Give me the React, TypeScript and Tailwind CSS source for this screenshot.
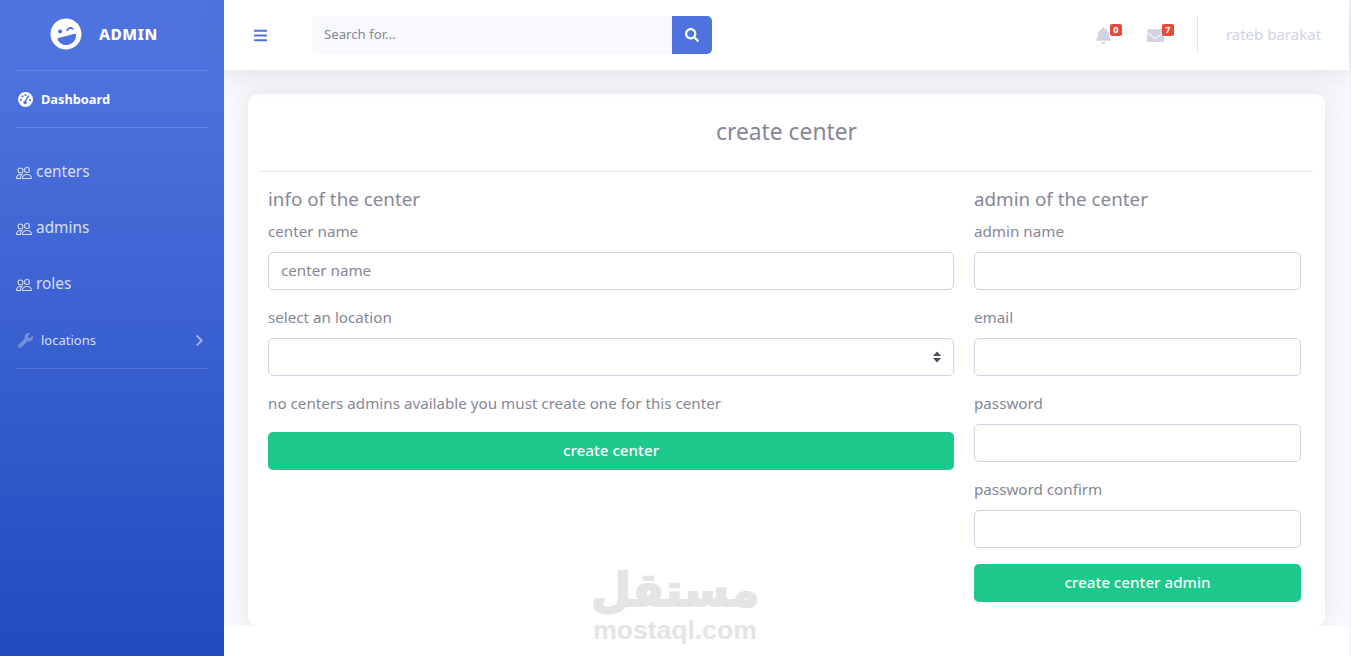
import React from "react";
import { FaLaughWink, FaWrench, FaChevronRight, FaBell, FaEnvelope, FaSearch, FaBars } from "react-icons/fa";
import { BsPeople } from "react-icons/bs";

const font = { fontFamily: '"Noto Sans", sans-serif' };

function NavItem({ label }: { label: string }) {
  return (
    <div className="h-14 flex items-center px-4 pb-[1px] text-[rgba(255,255,255,0.8)] text-[15.4px]">
      <BsPeople className="w-4 h-4 mr-1 mt-[2px] shrink-0" />
      <span>{label}</span>
    </div>
  );
}

function Field({ label, placeholder }: { label: string; placeholder?: string }) {
  return (
    <div className="mb-4">
      <label className="block text-[15.2px] leading-[22px] mb-[10px] text-[#858796]">{label}</label>
      <input
        placeholder={placeholder}
        className="block w-full h-[38px] px-3 pb-[2px] text-[15.2px] border border-[#d1d3e2] rounded-[5px] bg-white placeholder:text-[#858796] outline-none"
      />
    </div>
  );
}

export default function App() {
  return (
    <div className="relative flex h-[656px] w-[1351px] overflow-hidden bg-white text-[#858796]" style={font}>
      <aside className="w-[224px] shrink-0 bg-gradient-to-b from-[#4e73df] from-[10%] to-[#224abe] text-white">
        <div className="h-[70px] flex items-center pl-[50px] pb-[2px]">
          <FaLaughWink className="w-8 h-8" style={{ transform: "rotate(-15deg)" }} />
          <span className="ml-[17px] mt-[1px] font-extrabold text-[15.5px] tracking-[0.5px]">ADMIN</span>
        </div>
        <div className="mx-4 border-t border-[rgba(255,255,255,0.15)]" />
        <div className="h-14 flex items-center pl-[18px] pt-[1px] font-bold text-[12.8px]">
          <svg className="mr-2" width="15" height="15" viewBox="0 0 15 15">
            <circle cx="7.5" cy="7.5" r="7.5" fill="#ffffff" />
            <circle cx="3" cy="8" r="1.1" fill="#4e73df" />
            <circle cx="4.5" cy="4.5" r="1.1" fill="#4e73df" />
            <circle cx="7.5" cy="3" r="1.1" fill="#4e73df" />
            <circle cx="12" cy="8" r="1.1" fill="#4e73df" />
            <path d="M10.6 3.6 L7.5 9" stroke="#4e73df" strokeWidth="1.5" />
            <circle cx="7" cy="10.5" r="1.7" fill="#4e73df" />
          </svg>
          <span>Dashboard</span>
        </div>
        <div className="mx-4 border-t border-[rgba(255,255,255,0.15)] mb-4" />
        <NavItem label="centers" />
        <NavItem label="admins" />
        <NavItem label="roles" />
        <div className="h-14 flex items-center pl-[18px] pr-[18px] pt-[1px] text-[13px] text-[rgba(255,255,255,0.8)]">
          <FaWrench className="w-[15px] h-[15px] mr-[8px] text-[rgba(255,255,255,0.3)]" />
          <span className="flex-1">locations</span>
          <FaChevronRight className="w-[13px] h-[13px] text-[rgba(255,255,255,0.5)]" />
        </div>
        <div className="mx-4 border-t border-[rgba(255,255,255,0.15)]" />
      </aside>

      <div className="flex-1 flex flex-col min-w-0 bg-[#f3f4f7]">
        <header className="h-[70px] shrink-0 w-[1125px] bg-white shadow-[0_4px_28px_rgba(58,59,69,0.12)] flex items-center relative z-10">
          <FaBars className="ml-[29px] w-[15px] h-[15px] text-[#4e73df]" />
          <div className="ml-[44px] flex w-[400px] h-[38px]">
            <input
              placeholder="Search for..."
              className="flex-1 min-w-0 px-3 text-[13.2px] bg-[#f8f9fc] rounded-l-[5px] placeholder:text-[#858796] outline-none"
            />
            <button className="w-10 bg-[#4e73df] rounded-r-[5px] flex items-center justify-center text-white">
              <FaSearch className="w-[14px] h-[14px]" />
            </button>
          </div>
          <div className="ml-auto flex items-center h-full">
            <div className="relative mt-[1px]">
              <FaBell className="w-[17px] h-[17px] text-[#d1d3e2]" />
              <span className="absolute -top-[3px] left-[15px] bg-[#e74a3b] text-white text-[9px] font-bold leading-[12px] w-3 h-3 rounded-[2px] text-center">0</span>
            </div>
            <div className="relative ml-[35px] mt-[1px]">
              <FaEnvelope className="w-[17px] h-[17px] text-[#d1d3e2]" />
              <span className="absolute -top-[3px] left-[15px] bg-[#e74a3b] text-white text-[9px] font-bold leading-[12px] w-3 h-3 rounded-[2px] text-center">7</span>
            </div>
            <div className="ml-[33px] h-[38px] border-l border-[#e3e6f0]" />
            <span className="ml-[28px] mr-[28px] pb-[1px] text-[15px] text-[#d1d3e2]">rateb barakat</span>
          </div>
        </header>

        <main className="h-[556px] w-[1125px] shrink-0 bg-[#f8f9fc] pt-6 pl-6 pr-6 overflow-hidden">
          <div className="w-[1077px] h-[532px] bg-white rounded-[10px] shadow-[0_0_24px_rgba(58,59,69,0.1)] px-3">
            <h1 className="h-[77px] pb-[1px] flex items-center justify-center text-[22.8px] text-[#858796]">create center</h1>
            <div className="border-t border-[#e3e6f0]" />
            <div className="flex pt-4 px-2">
              <div className="w-[686px] shrink-0">
                <h2 className="text-[18.8px] leading-[22px] mb-[10px]">info of the center</h2>
                <Field label="center name" placeholder="center name" />
                <div className="mb-4">
                  <label className="block text-[15.2px] leading-[22px] mb-[10px]">select an location</label>
                  <div className="relative h-[38px]">
                    <select className="block w-full h-full px-3 border border-[#d1d3e2] rounded-[5px] bg-white appearance-none outline-none" />
                    <svg className="absolute right-[13px] top-[13px]" width="8" height="12" viewBox="0 0 8 12">
                      <path d="M4 0.5 L8 5 H0 Z M4 11.5 L0 7 H8 Z" fill="#4a4d5a" />
                    </svg>
                  </div>
                </div>
                <p className="text-[15.2px] leading-[22px] mb-[18px]">no centers admins available you must create one for this center</p>
                <button className="w-full h-[38px] pb-[2px] bg-[#1cc88a] rounded-[5px] text-white text-[15.2px] font-medium">create center</button>
              </div>
              <div className="w-[327px] ml-5 shrink-0">
                <h2 className="text-[18.8px] leading-[22px] mb-[10px]">admin of the center</h2>
                <Field label="admin name" />
                <Field label="email" />
                <Field label="password" />
                <Field label="password confirm" />
                <button className="w-full h-[38px] pb-[2px] bg-[#1cc88a] rounded-[5px] text-white text-[15.2px] font-medium">create center admin</button>
              </div>
            </div>
          </div>
        </main>
        <div className="flex-1 w-[1125px] bg-white" />
      </div>

      <div className="absolute left-[593px] top-[563px] w-[164px] flex flex-col items-center text-[#e4e4e4] pointer-events-none">
        <span className="text-[46px] leading-[54px] font-bold [-webkit-text-stroke:2px_#e4e4e4]" style={{ fontFamily: '"DejaVu Sans", sans-serif' }}>مستقل</span>
        <span className="text-[26.5px] leading-[26px] font-bold" style={{ fontFamily: '"Liberation Sans", sans-serif' }}>mostaql.com</span>
      </div>
    </div>
  );
}
